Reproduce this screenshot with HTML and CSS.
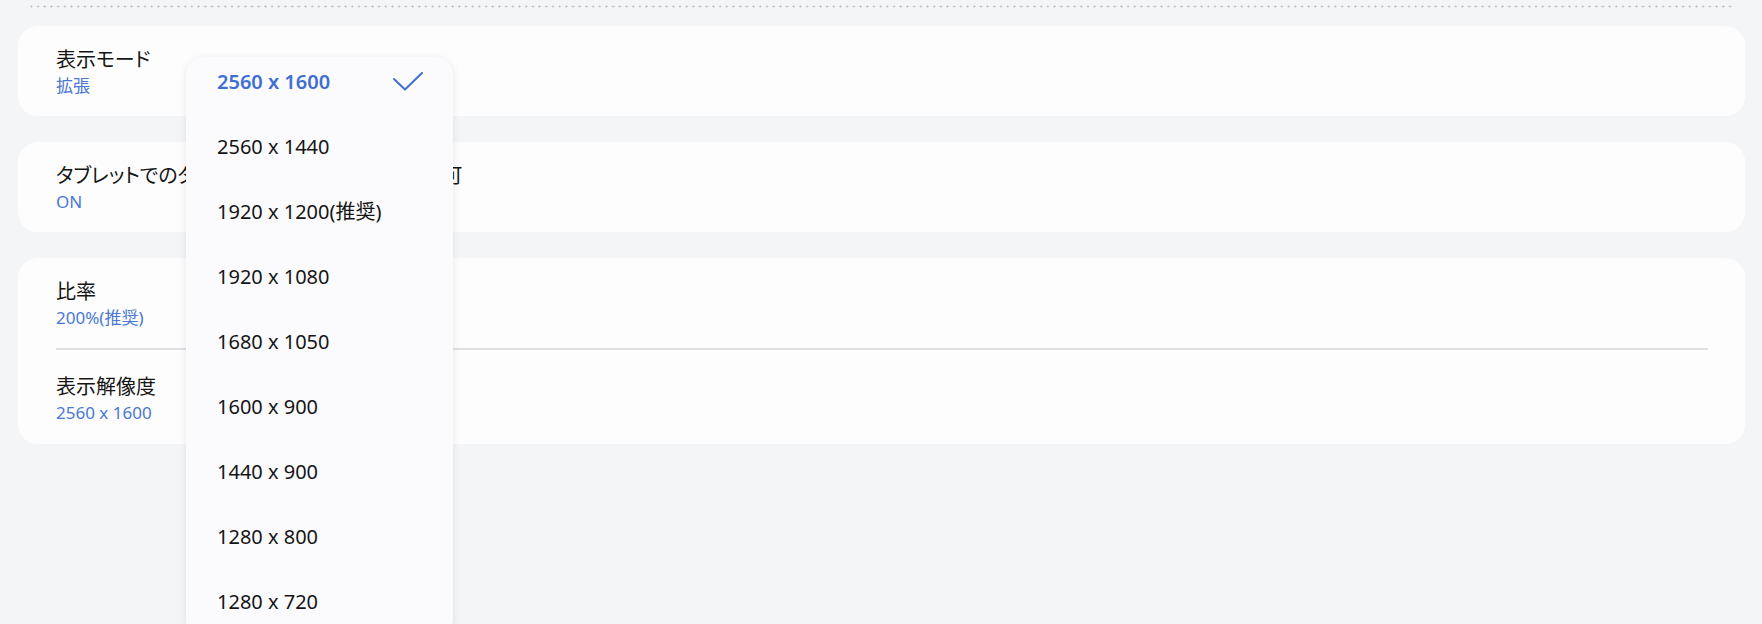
FILE: index.html
```html
<!DOCTYPE html>
<html lang="ja">
<head>
  <meta charset="UTF-8">
  <title>ディスプレイ設定</title>
  <link rel="stylesheet" href="styles.css">
</head>
<body>
  <div class="page">
    <div class="dots"></div>

    <div class="card">
      <div class="row">
        <div class="title">表示モード</div>
        <div class="value">拡張</div>
      </div>
    </div>

    <div class="card">
      <div class="row">
        <div class="title">タブレットでのタッチ操作とペン入力を常に許可</div>
        <div class="value">ON</div>
      </div>
    </div>

    <div class="card">
      <div class="row">
        <div class="title">比率</div>
        <div class="value">200%(推奨)</div>
      </div>
      <div class="divider"></div>
      <div class="row last">
        <div class="title">表示解像度</div>
        <div class="value">2560 x 1600</div>
      </div>
    </div>

    <ul class="menu">
      <li class="selected">
        <span>2560 x 1600</span>
        <svg width="30" height="20" viewBox="0 0 30 20"><path d="M1 7 L12 17.5 L29 1" fill="none" stroke="#3f6fd3" stroke-width="2" stroke-linecap="round" stroke-linejoin="round"/></svg>
      </li>
      <li>2560 x 1440</li>
      <li>1920 x 1200(推奨)</li>
      <li>1920 x 1080</li>
      <li>1680 x 1050</li>
      <li>1600 x 900</li>
      <li>1440 x 900</li>
      <li>1280 x 800</li>
      <li>1280 x 720</li>
    </ul>
  </div>
</body>
</html>
```

FILE: styles.css
```css
body {
  margin: 0;
  background-color: #f4f5f7;
  font-family: "Noto Sans", "Noto Sans CJK JP", sans-serif;
  color: #151515;
  overflow: hidden;
}
.page {
  position: relative;
  padding: 0 17px 0 18px;
  height: 624px;
}
.dots {
  height: 3px;
  margin: 5px 12px 18px 10px;
  background-image: radial-gradient(circle, #c4c5c9 0.9px, transparent 1.3px);
  background-size: 6.7px 3px;
  background-repeat: repeat-x;
}
.card {
  background-color: #fdfdfd;
  border-radius: 20px;
  margin-bottom: 26px;
}
.row {
  padding: 21px 38px 17px;
}
.row.last {
  padding-top: 24px;
  padding-bottom: 18px;
}
.title {
  font-size: 20px;
  line-height: 26px;
  white-space: nowrap;
  font-feature-settings: "palt";
}
.value {
  font-size: 17px;
  line-height: 26px;
  color: #4a78d4;
}
.divider {
  height: 1.5px;
  background-color: #e0e0e2;
  margin: 0 37px 0 38px;
}
.menu {
  position: absolute;
  left: 186px;
  top: 52px;
  width: 267px;
  height: 580px;
  margin: 0;
  padding: 0;
  list-style: none;
  background-color: #fbfbfd;
  border-radius: 18px;
  box-shadow: 0 2px 10px rgba(0, 0, 0, 0.09);
}
.menu li {
  display: flex;
  align-items: center;
  justify-content: space-between;
  height: 49px;
  padding: 0 31px 16px;
  font-size: 20px;
  line-height: 49px;
}
.menu li.selected {
  color: #3f6fd3;
  font-weight: 600;
}
.menu li svg {
  margin-right: -1px;
}
```
